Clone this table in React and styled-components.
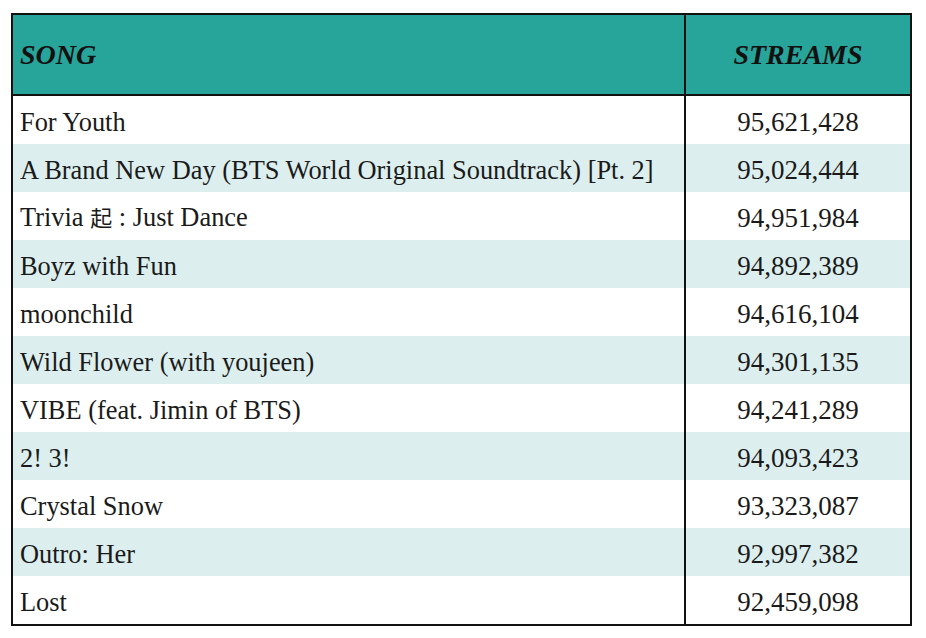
import React from 'react';
import styled, { createGlobalStyle } from 'styled-components';

const GlobalStyle = createGlobalStyle`
  body {
    margin: 0;
    background: #ffffff;
    font-family: "Liberation Serif", "Noto Sans CJK SC", serif;
  }
`;

const Page = styled.div`
  padding: 13px 0 0 11px;
`;

const Table = styled.table`
  width: 901px;
  table-layout: fixed;
  border-collapse: collapse;
  border: 2px solid #111;
  color: #1a1a1a;
`;

const HeadCell = styled.th`
  background: #27a59a;
  height: 79px;
  padding: 0 7px;
  font-size: 28px;
  font-weight: bold;
  font-style: italic;
  text-align: ${props => (props.center ? 'center' : 'left')};
  width: ${props => props.w || 'auto'};
  border: 2px solid #111;
  color: #111;
`;

const Row = styled.tr`
  background: ${props => (props.striped ? '#dcefee' : '#ffffff')};
`;

const Cell = styled.td`
  height: 45px;
  padding: 3px 7px 0;
  font-size: ${props => (props.center ? '27px' : '26.4px')};
  line-height: 30px;
  white-space: nowrap;
  text-align: ${props => (props.center ? 'center' : 'left')};
  border-left: 2px solid #111;
  border-right: 2px solid #111;
`;

const Glyph = styled.span`
  font-size: 22px;
`;

const songs = [
  ['For Youth', '95,621,428'],
  ['A Brand New Day (BTS World Original Soundtrack) [Pt. 2]', '95,024,444'],
  ['Trivia @ : Just Dance', '94,951,984'],
  ['Boyz with Fun', '94,892,389'],
  ['moonchild', '94,616,104'],
  ['Wild Flower (with youjeen)', '94,301,135'],
  ['VIBE (feat. Jimin of BTS)', '94,241,289'],
  ['2! 3!', '94,093,423'],
  ['Crystal Snow', '93,323,087'],
  ['Outro: Her', '92,997,382'],
  ['Lost', '92,459,098'],
];

function SongName({ name }) {
  if (!name.includes('@')) return name;
  const [before, after] = name.split('@');
  return (
    <>
      {before}
      <Glyph>起</Glyph>
      {after}
    </>
  );
}

export default function App() {
  return (
    <Page>
      <GlobalStyle />
      <Table>
        <thead>
          <tr>
            <HeadCell>SONG</HeadCell>
            <HeadCell center w="210px">STREAMS</HeadCell>
          </tr>
        </thead>
        <tbody>
          {songs.map(([name, streams], i) => (
            <Row key={name} striped={i % 2 === 1}>
              <Cell>
                <SongName name={name} />
              </Cell>
              <Cell center>{streams}</Cell>
            </Row>
          ))}
        </tbody>
      </Table>
    </Page>
  );
}
